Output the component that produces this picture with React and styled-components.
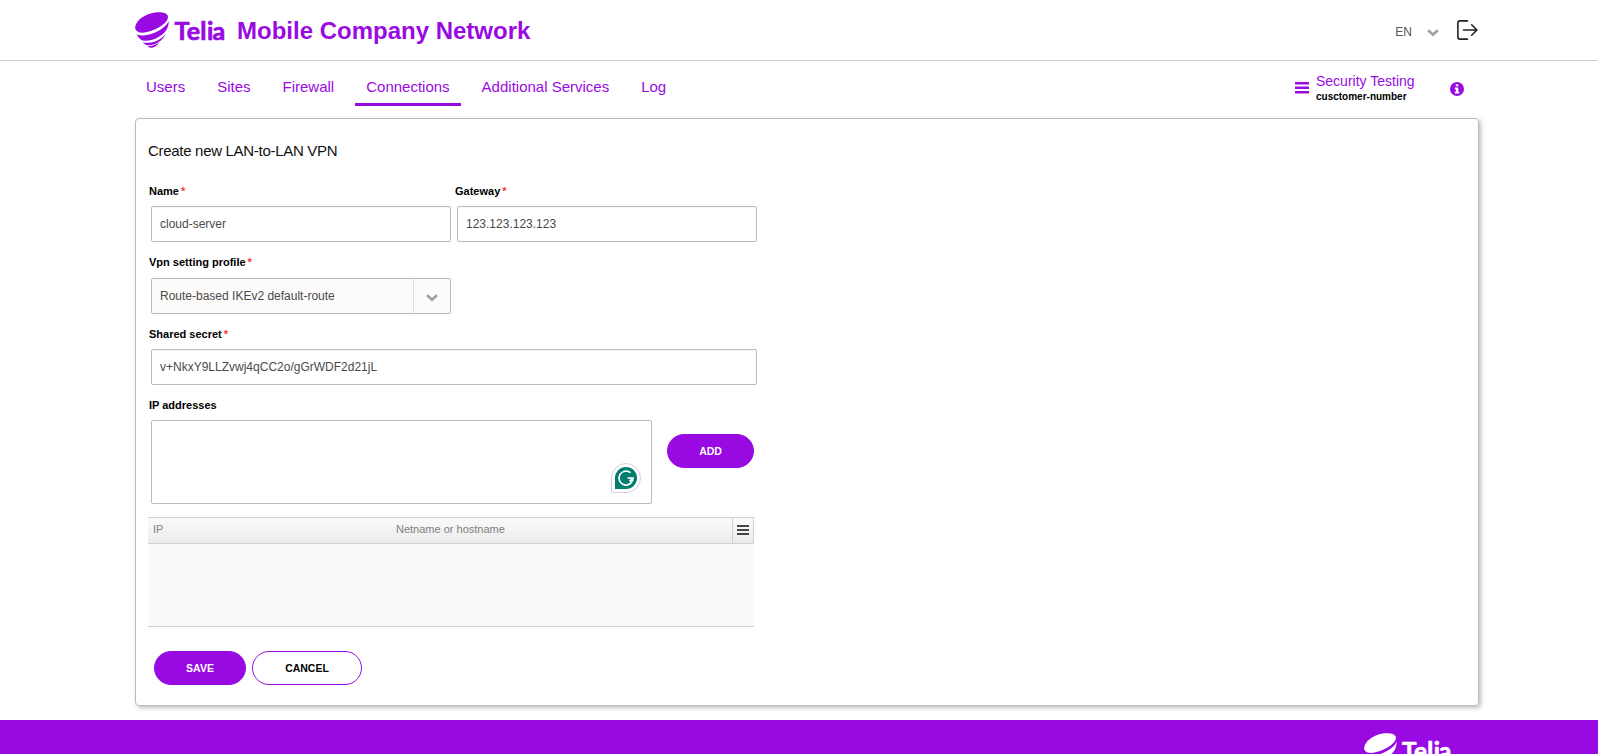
import React from "react";
import styled, { createGlobalStyle, css } from "styled-components";

const purple = "#990ae3";

const GlobalStyle = createGlobalStyle`
  *, *::before, *::after { box-sizing: border-box; }
  body {
    margin: 0;
    background: #fff;
    color: #000;
    font-family: "Liberation Sans", Arial, sans-serif;
    overflow: hidden;
  }
`;

const Page = styled.div`
  display: flex;
  flex-direction: column;
  height: 754px;
  overflow: hidden;
`;

const Container = styled.div`
  width: 1344px;
  margin-left: 135px;
  display: flex;
`;

const Header = styled.header`
  flex: none;
  height: 61px;
  border-bottom: 1px solid #ccc;
`;

const HeaderInner = styled(Container)`
  height: 60px;
  align-items: center;
`;

const AppTitle = styled.h1`
  margin: 1px 0 0 10px;
  font-size: 24px;
  line-height: 28px;
  font-weight: bold;
  color: ${purple};
`;

const Tools = styled.div`
  display: flex;
  align-items: center;
  margin-left: auto;
  padding-right: 1px;
`;

const Language = styled.button`
  display: flex;
  align-items: center;
  gap: 15px;
  margin: 3px 18px 0 0;
  padding: 0;
  border: 0;
  background: none;
  font: 12px/16px "Liberation Sans", Arial, sans-serif;
  color: #555;
  svg { margin-top: 2px; }
`;

const SubHeader = styled(Container)`
  flex: none;
  height: 57px;
  justify-content: space-between;
`;

const Nav = styled.nav`
  display: flex;
  gap: 10px;
  align-items: flex-start;
`;

const Tab = styled.a`
  height: 45px;
  padding: 17px 11px 0;
  font-size: 15px;
  line-height: 18px;
  color: ${purple};
  border-bottom: 3px solid ${(p) => (p.$active ? purple : "transparent")};
`;

const Account = styled.div`
  display: flex;
  align-items: flex-start;
  padding: 11px 15px 0 0;
`;

const AccountText = styled.div`
  display: flex;
  flex-direction: column;
  width: 134px;
  margin-left: 7px;
`;

const AccountName = styled.span`
  font-size: 14px;
  line-height: 19px;
  color: ${purple};
`;

const AccountNumber = styled.span`
  font-size: 10px;
  line-height: 12px;
  font-weight: bold;
`;

const MenuIcon = styled.svg`
  margin: 10px 0 0;
`;

const InfoIcon = styled.svg`
  margin-top: 10px;
`;

const Panel = styled.main`
  flex: none;
  width: 1344px;
  height: 588px;
  margin-left: 135px;
  padding: 0 12px;
  border: 1px solid #bbb;
  border-radius: 4px;
  box-shadow: 2px 2px 4px rgba(0, 0, 0, 0.25);
`;

const PanelTitle = styled.h2`
  margin: 23px 0 0;
  font-size: 15px;
  line-height: 18px;
  font-weight: normal;
  letter-spacing: -0.3px;
  color: #111;
`;

const Form = styled.form`
  width: 612px;
  margin-top: 24px;
`;

const Row = styled.div`
  display: flex;
  height: ${(p) => p.$height}px;
`;

const Field = styled.div`
  display: flex;
  flex-direction: column;
  flex: none;
  width: ${(p) => p.$width || 306}px;
`;

const Label = styled.label`
  height: ${(p) => p.$height || 22}px;
  padding-left: 1px;
  font-size: 11px;
  line-height: 14px;
  font-weight: bold;
  flex: none;
`;

const Required = styled.span`
  margin-left: 2px;
  color: #f4392f;
`;

const control = css`
  margin: 0 3px;
  border: 1px solid #bbb;
  border-radius: 2px;
  font: 12px/16px "Liberation Sans", Arial, sans-serif;
  color: #4a4a4a;
`;

const Input = styled.input`
  ${control}
  height: 36px;
  padding: 0 8px;
  background: #fff;
  outline: none;
  box-shadow: inset 0 1px 1px rgba(0, 0, 0, 0.04);
`;

const Select = styled.div`
  ${control}
  display: flex;
  height: 36px;
  padding-left: 8px;
  background: #fcfbfa;
`;

const SelectValue = styled.span`
  flex: 1;
  padding-top: 9px;
`;

const SelectArrow = styled.span`
  display: flex;
  align-items: center;
  justify-content: center;
  width: 37px;
  padding-top: 4px;
  border-left: 1px solid #ddd;
`;

const AddressBox = styled.div`
  ${control}
  height: 84px;
  display: flex;
  align-items: flex-end;
  justify-content: flex-end;
  padding: 0 10px 10px 0;
  background: #fff;
`;

const Button = styled.button`
  flex: none;
  width: ${(p) => p.$width}px;
  height: 34px;
  padding: 0;
  border: 1px solid ${purple};
  border-radius: 17px;
  background: ${(p) => (p.$outline ? "#fff" : purple)};
  color: ${(p) => (p.$outline ? "#000" : "#fff")};
  font: bold 10.5px/16px "Liberation Sans", Arial, sans-serif;
`;

const AddButton = styled(Button)`
  margin: 36px 0 0 12px;
`;

const Table = styled.div`
  width: 606px;
  height: 110px;
  background: #fafafa;
  border-bottom: 1px solid #d0d0d0;
`;

const TableHead = styled.div`
  display: flex;
  height: 27px;
  border: solid #d0d0d0;
  border-width: 1px 0;
  background: linear-gradient(#fafafa, #ececec);
  font-size: 11px;
  line-height: 14px;
  color: #808080;
`;

const HeadCell = styled.div`
  width: ${(p) => p.$width}px;
  padding: 4px 5px 0;
`;

const GridMenu = styled.div`
  display: flex;
  align-items: flex-start;
  justify-content: center;
  width: 22px;
  padding-top: 7px;
  margin-left: auto;
  border: solid #d0d0d0;
  border-width: 0 1px;
`;

const Actions = styled.div`
  display: flex;
  gap: 6px;
  margin-top: 24px;
  padding-left: 6px;
`;

const Footer = styled.footer`
  flex: none;
  height: 60px;
  margin-top: 14px;
  padding: 13px 145px 0 0;
  display: flex;
  justify-content: flex-end;
  align-items: flex-start;
  background: ${purple};
`;

function TeliaLogo({ color, width }) {
  return (
    <svg width={width} height={(width * 36) / 92} viewBox="0 0 92 36" fill={color}>
      <path d="M.2 16.800C-.6 8.500 11.500.3 23.500.2c5.500 0 9.300 1.300 9.500 4.600.2 4.600-6.200 9.600-14 12.900C11 21 2.600 22.600.2 16.800Z" />
      <path d="M1.700 22.300c4.200 2.300 11.500 1 18.500-1.900 7-3 12-7.200 13.500-11.600.1 3.200-.6 6-2 8.800-2.800 4.600-8 8.300-14.400 10.200-5.200 1.500-9.600 1.200-12-.6-1.600-1.400-2.800-3-3.600-4.900Z" />
      <path d="M7.500 30.300c3.700 1 8.300.6 12.800-.9 4.300-1.500 8-4.400 10.500-8-1.300 2.900-2.700 4.800-4.600 6.900-3.400 2.800-6.300 4.200-9.700 4.700-2.300.4-4 .3-5.200-.1-1.500-.7-2.700-1.600-3.800-2.600Z" />
      <path d="M12.300 34.200c4.300.3 8.200-.9 12-3.600-2.600 3.400-5 5.200-7.300 5.200-1.500 0-3.100-.5-4.700-1.600Z" />
      <text
        x="39.400 51.800 65.300 72 77.600"
        y="28.300"
        fontFamily="Lato, sans-serif"
        fontWeight="bold"
        fontSize="25"
        stroke={color}
        strokeWidth="0.700"
        strokeLinejoin="round"
      >
        Telia
      </text>
    </svg>
  );
}

const Chevron = () => (
  <svg width="12" height="8" viewBox="0 0 12 8" fill="none" stroke="#a0a0a0" strokeWidth="2.600">
    <path d="M1.200 1.200 6 5.800l4.800-4.600" />
  </svg>
);

const LogoutIcon = () => (
  <svg width="21" height="20" viewBox="0 0 21 20" fill="none" stroke="#222" strokeWidth="1.600" strokeLinecap="round" strokeLinejoin="round">
    <path d="M10.500.9H3Q.9.900.9 3v14q0 2.100 2.100 2.100h7.500M6.500 10h13.200M14.700 4.800l5.200 5.200-5.200 5.200" />
  </svg>
);

const AssistantBadge = () => (
  <svg width="30" height="30" viewBox="0 0 30 30" fill="none">
    <path d="M.5 29.500V15A14.500 14.500 0 1 1 15 29.500Z" fill="#fff" stroke="#d3d1e0" />
    <path d="M4 26V15a11 11 0 1 1 11 11Z" fill="#027e6f" />
    <path d="M19.500 9.700A7 7 0 1 0 22 15h-5.500M18.500 18.300 21.500 15.300" stroke="#fff" strokeWidth="1.700" />
  </svg>
);

const RequiredLabel = ({ children, height }) => (
  <Label $height={height}>
    {children}
    <Required>*</Required>
  </Label>
);

export default function App() {
  const tabs = ["Users", "Sites", "Firewall", "Connections", "Additional Services", "Log"];
  return (
    <Page>
      <GlobalStyle />
      <Header>
        <HeaderInner>
          <TeliaLogo color={purple} width={92} />
          <AppTitle>Mobile Company Network</AppTitle>
          <Tools>
            <Language>
              EN
              <Chevron />
            </Language>
            <LogoutIcon />
          </Tools>
        </HeaderInner>
      </Header>
      <SubHeader>
        <Nav>
          {tabs.map((t) => (
            <Tab key={t} $active={t === "Connections"}>{t}</Tab>
          ))}
        </Nav>
        <Account>
          <MenuIcon width="14" height="12" viewBox="0 0 14 12" fill={purple}>
            <path d="M0 0h14v2.400H0zM0 4.500h14v2.400H0zM0 9h14v2.400H0z" />
          </MenuIcon>
          <AccountText>
            <AccountName>Security Testing</AccountName>
            <AccountNumber>cusctomer-number</AccountNumber>
          </AccountText>
          <InfoIcon width="14" height="14" viewBox="0 0 14 14">
            <circle cx="7" cy="7" r="7" fill={purple} />
            <path d="M5.800 2.300h2.500v2H5.800zM4.800 5.500h3.500v4.200h1v1.700H4.800V9.700h1V7.200h-1z" fill="#fff" />
          </InfoIcon>
        </Account>
      </SubHeader>
      <Panel>
        <PanelTitle>Create new LAN-to-LAN VPN</PanelTitle>
        <Form>
          <Row $height={71}>
            <Field>
              <RequiredLabel>Name</RequiredLabel>
              <Input defaultValue="cloud-server" />
            </Field>
            <Field>
              <RequiredLabel>Gateway</RequiredLabel>
              <Input defaultValue="123.123.123.123" />
            </Field>
          </Row>
          <Row $height={72}>
            <Field>
              <RequiredLabel height={23}>Vpn setting profile</RequiredLabel>
              <Select>
                <SelectValue>Route-based IKEv2 default-route</SelectValue>
                <SelectArrow><Chevron /></SelectArrow>
              </Select>
            </Field>
          </Row>
          <Row $height={71}>
            <Field $width={612}>
              <RequiredLabel>Shared secret</RequiredLabel>
              <Input defaultValue="v+NkxY9LLZvwj4qCC2o/gGrWDF2d21jL" />
            </Field>
          </Row>
          <Row $height={119}>
            <Field $width={507}>
              <Label>IP addresses</Label>
              <AddressBox><AssistantBadge /></AddressBox>
            </Field>
            <AddButton type="button" $width={87}>ADD</AddButton>
          </Row>
          <Table>
            <TableHead>
              <HeadCell $width={243}>IP</HeadCell>
              <HeadCell $width={300}>Netname or hostname</HeadCell>
              <GridMenu>
                <svg width="12" height="10" viewBox="0 0 12 10" fill="#444">
                  <path d="M0 0h12v2H0zM0 4h12v2H0zM0 8h12v2H0z" />
                </svg>
              </GridMenu>
            </TableHead>
          </Table>
          <Actions>
            <Button type="button" $width={92}>SAVE</Button>
            <Button type="button" $width={110} $outline>CANCEL</Button>
          </Actions>
        </Form>
      </Panel>
      <Footer>
        <TeliaLogo color="#fff" width={89} />
      </Footer>
    </Page>
  );
}
